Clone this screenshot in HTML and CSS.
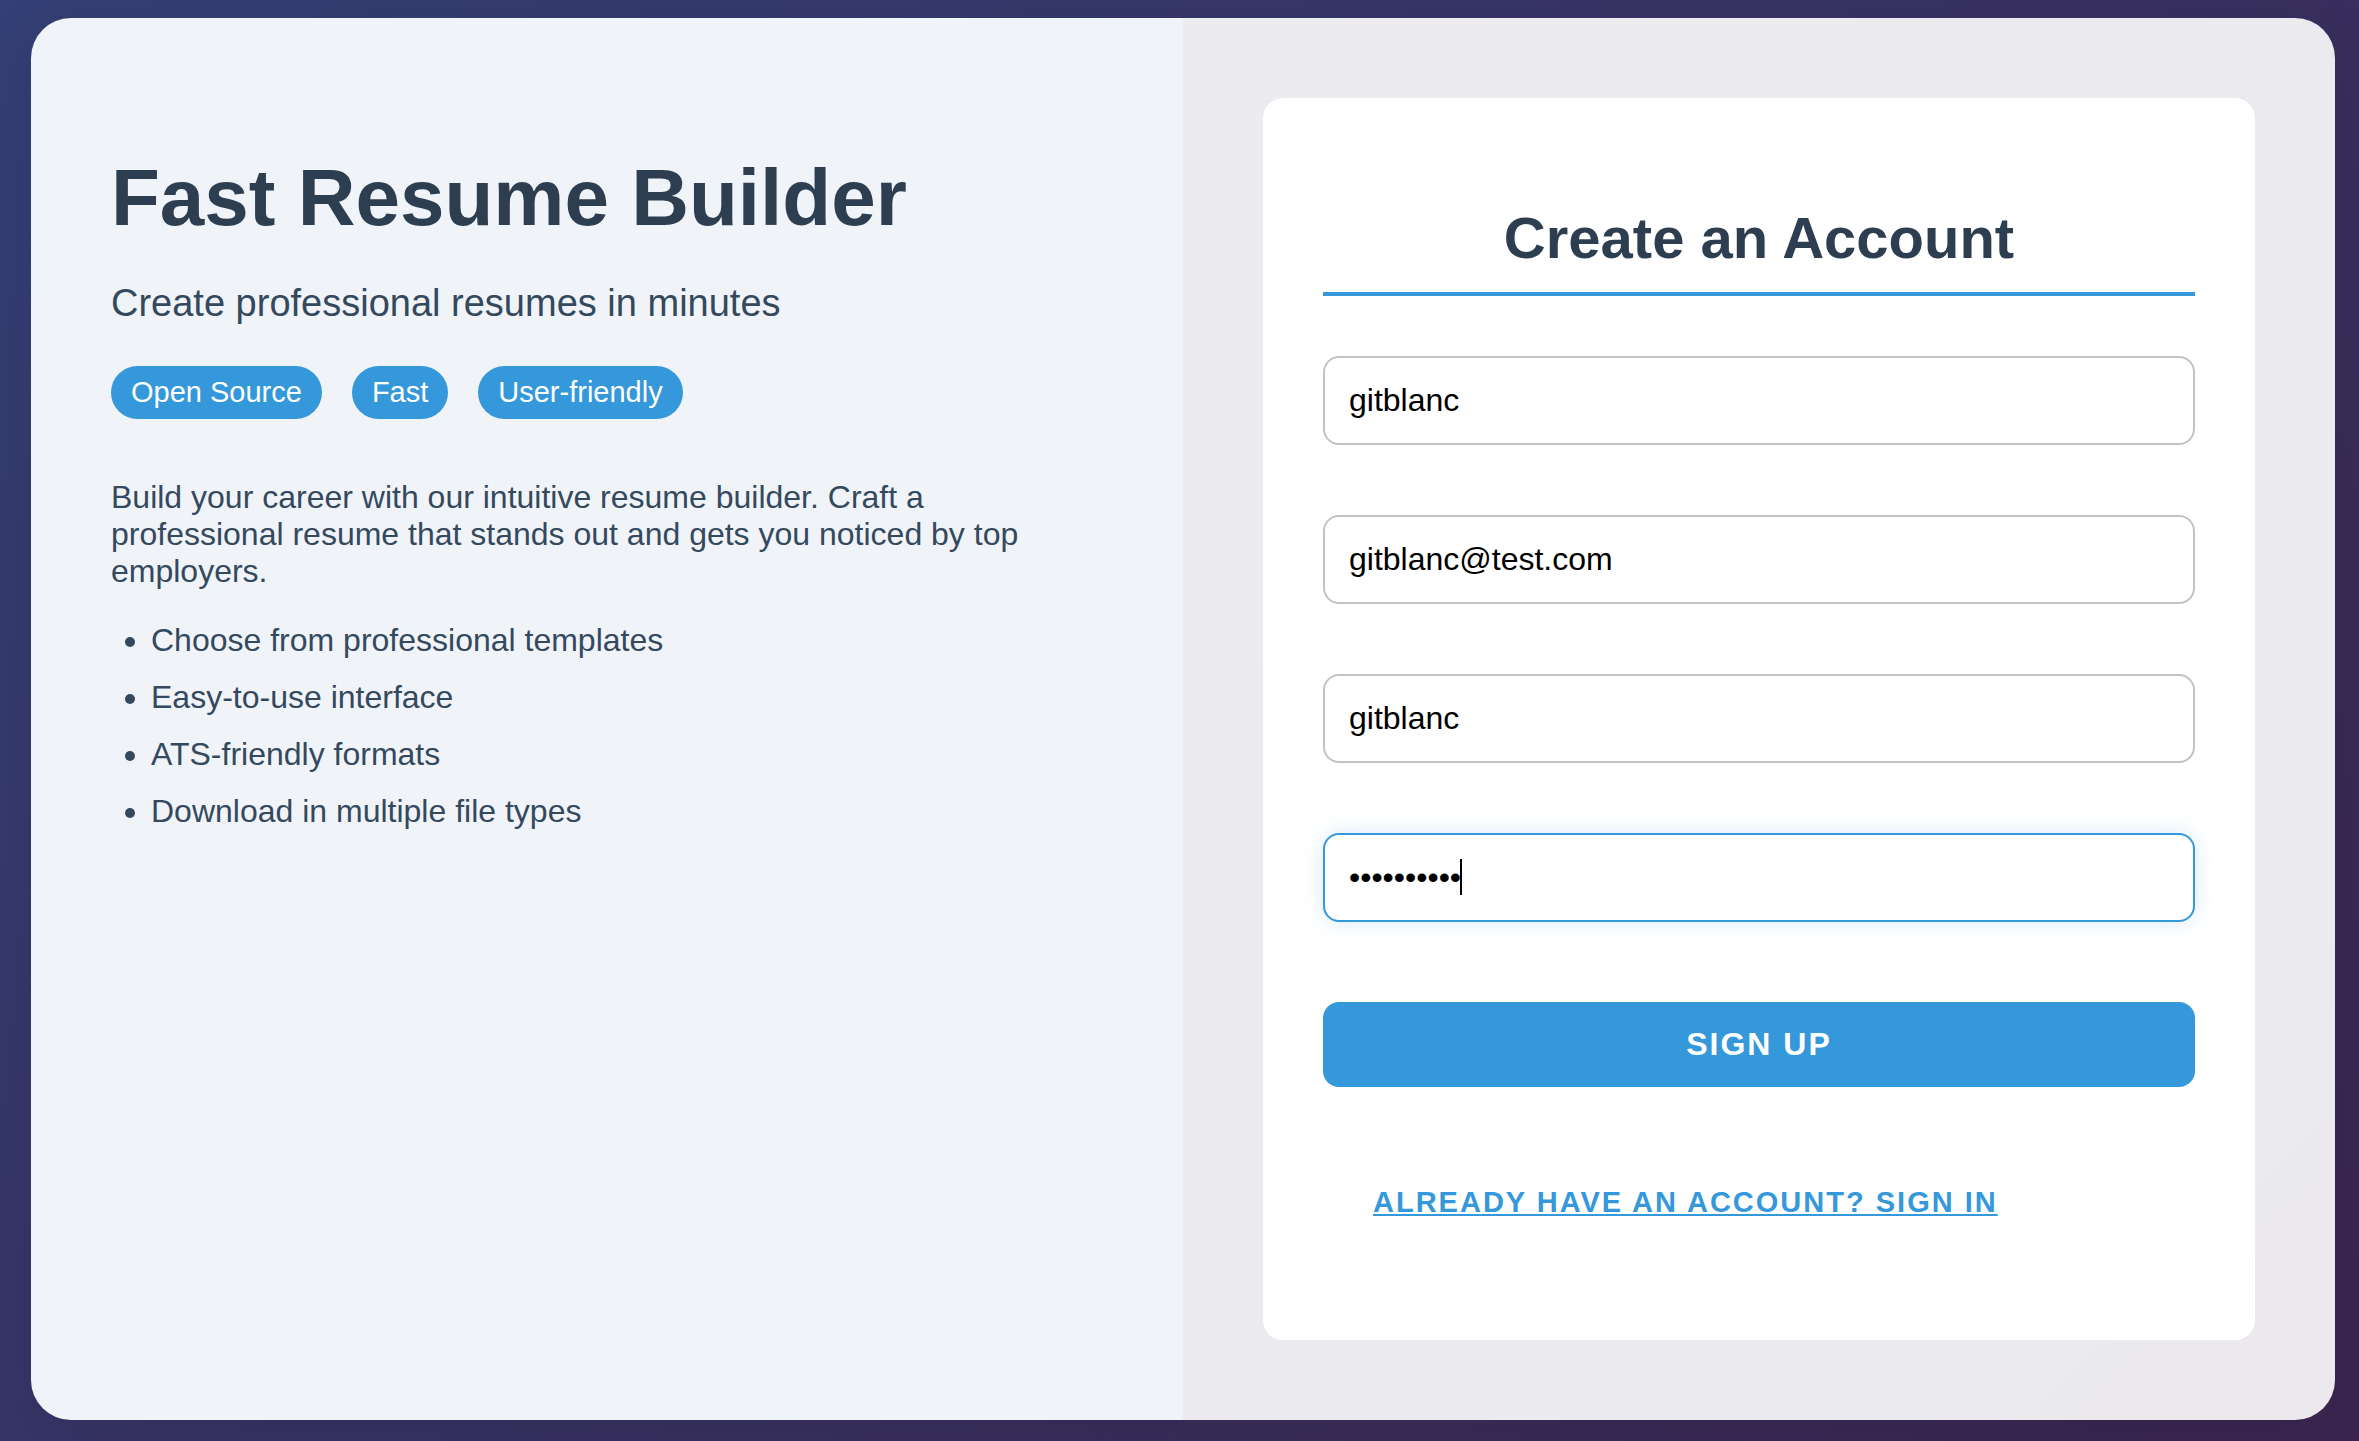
FILE: index.html
```html
<!DOCTYPE html>
<html lang="en">
<head>
<meta charset="utf-8">
<meta name="viewport" content="width=device-width, initial-scale=1">
<title>Fast Resume Builder</title>
<link rel="stylesheet" href="styles.css">
</head>
<body>
<main class="card">
  <section class="intro">
    <h1 class="intro-title">Fast Resume Builder</h1>
    <p class="intro-subtitle">Create professional resumes in minutes</p>
    <div class="badges">
      <span class="badge">Open Source</span>
      <span class="badge">Fast</span>
      <span class="badge">User-friendly</span>
    </div>
    <p class="intro-text">Build your career with our intuitive resume builder. Craft a professional resume that stands out and gets you noticed by top employers.</p>
    <ul class="features">
      <li>Choose from professional templates</li>
      <li>Easy-to-use interface</li>
      <li>ATS-friendly formats</li>
      <li>Download in multiple file types</li>
    </ul>
  </section>
  <section class="signup">
    <form class="form">
      <h2 class="form-title">Create an Account</h2>
      <div class="fields">
        <input class="field" type="text" aria-label="Username" value="gitblanc">
        <input class="field" type="email" aria-label="Email" value="gitblanc@test.com">
        <input class="field" type="text" aria-label="Name" value="gitblanc">
        <div class="password">
          <input class="field field-active" type="password" aria-label="Password" value="aaaaaaaaaa">
          <span class="caret"></span>
        </div>
      </div>
      <button class="submit" type="button">Sign Up</button>
      <a class="signin" href="#">Already have an account? Sign in</a>
    </form>
  </section>
</main>
</body>
</html>
```

FILE: styles.css
```css
* {
  box-sizing: border-box;
}

body {
  margin: 0;
  min-height: 100vh;
  padding: 18px 24px 21px 31px;
  display: flex;
  font-family: "Liberation Sans", Arial, sans-serif;
  font-size: 32px;
  line-height: 37px;
  color: #34495e;
  background: linear-gradient(135deg, #343f75, #3b2550);
}

.card {
  flex: 1;
  display: grid;
  grid-template-columns: 1fr 1fr;
  border-radius: 40px;
  overflow: hidden;
  box-shadow: 0 16px 64px rgba(0, 0, 0, 0.1);
}

.intro {
  padding: 134px 80px 80px;
  background: #f0f4f9;
}

.intro-title {
  margin: 0 0 36px;
  font-size: 80px;
  line-height: 92px;
  color: #2c3e50;
}

.intro-subtitle {
  margin: 0 0 40px;
  font-size: 38px;
  line-height: 46px;
}

.badges {
  display: flex;
  flex-wrap: wrap;
  gap: 30px;
  margin-bottom: 60px;
}

.badge {
  padding: 10px 20px;
  border-radius: 30px;
  font-size: 29px;
  line-height: 33px;
  color: #fff;
  background: #3498db;
}

.intro-text {
  margin: 0 0 32px;
}

.features {
  margin: 0;
  padding-left: 40px;
  display: grid;
  gap: 20px;
}

.signup {
  padding: 80px;
  display: flex;
  background: rgba(255, 255, 255, 0.9);
}

.form {
  flex: 1;
  display: flex;
  flex-direction: column;
  padding: 106px 60px 60px;
  border-radius: 20px;
  background: #fff;
}

.form-title {
  margin: 0 0 60px;
  padding-bottom: 20px;
  border-bottom: 4px solid #3498db;
  font-size: 58px;
  line-height: 68px;
  text-align: center;
  color: #2c3e50;
}

.fields {
  display: grid;
  gap: 70px;
  margin-bottom: 80px;
}

.field {
  display: block;
  width: 100%;
  height: 89px;
  padding: 0 24px;
  border: 2px solid #bdc3c7;
  border-radius: 16px;
  font: inherit;
  color: #000;
  background: #fff;
  outline: none;
}

.field-active {
  border-color: #3498db;
  box-shadow: 0 0 20px rgba(52, 152, 219, 0.2);
}

.password {
  position: relative;
}

.caret {
  position: absolute;
  left: 137px;
  top: 26px;
  width: 2px;
  height: 36px;
  background: #000;
}

.submit {
  height: 85px;
  padding: 0;
  border: 0;
  border-radius: 16px;
  font: bold 32px/37px "Liberation Sans", Arial, sans-serif;
  letter-spacing: 2px;
  text-transform: uppercase;
  color: #fff;
  background: #3498db;
}

.signin {
  align-self: flex-start;
  margin: 99px 50px 0;
  font-size: 29px;
  line-height: 33px;
  font-weight: bold;
  letter-spacing: 2px;
  text-transform: uppercase;
  color: #3498db;
}
```
